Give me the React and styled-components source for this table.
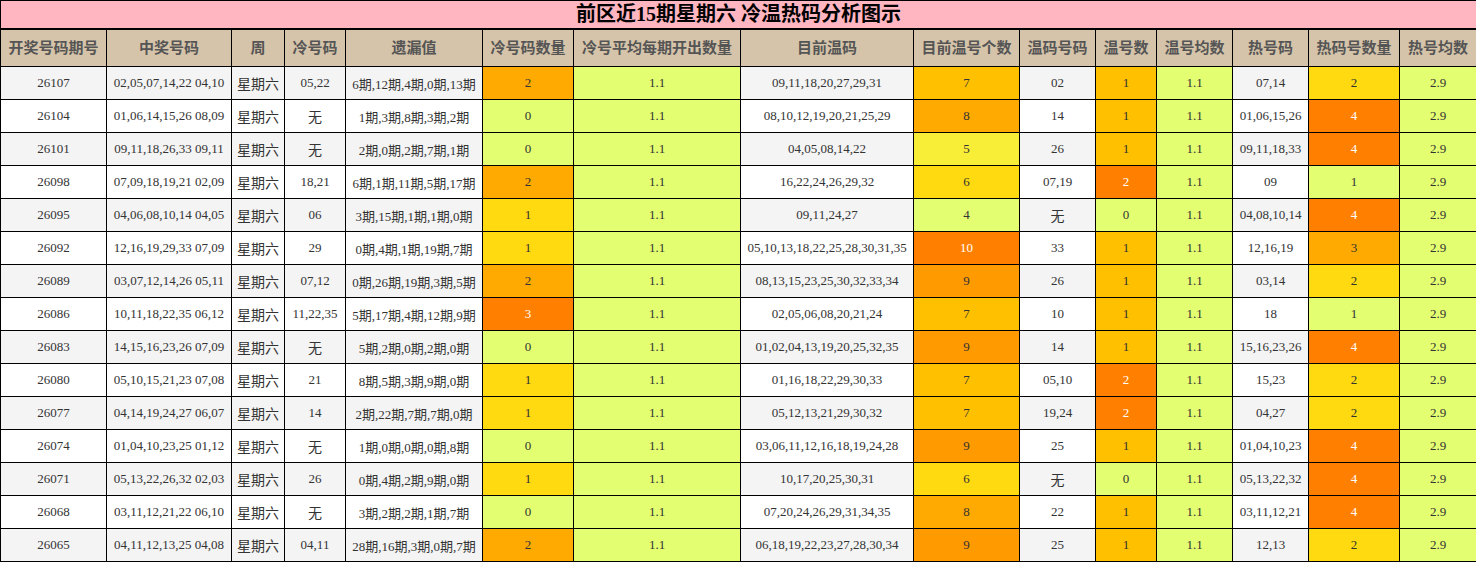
import React from "react";
import styled, { createGlobalStyle } from "styled-components";

const GlobalStyle = createGlobalStyle`
  body {
    margin: 0;
    background: #fff;
  }
`;

const FONT = `"Liberation Serif", "Noto Sans CJK SC", serif`;

// heat scale, from cool (green) to hot (dark orange)
const HEAT = ["#e4fe72", "#f8ee38", "#ffda10", "#ffc000", "#ffaa00", "#ff9a00", "#ff8000"];

const COLS = [106, 125, 53, 61, 137, 91, 167, 173, 106, 76, 61, 76, 76, 91, 77];

const HEADERS = [
  "开奖号码期号", "中奖号码", "周", "冷号码", "遗漏值", "冷号码数量", "冷号平均每期开出数量",
  "目前温码", "目前温号个数", "温码号码", "温号数", "温号均数", "热号码", "热码号数量", "热号均数",
];

const rows = [
  ["26107", "02,05,07,14,22 04,10", "05,22", "6期,12期,4期,0期,13期", 2, "09,11,18,20,27,29,31", 7, "02", 1, "07,14", 2],
  ["26104", "01,06,14,15,26 08,09", "无", "1期,3期,8期,3期,2期", 0, "08,10,12,19,20,21,25,29", 8, "14", 1, "01,06,15,26", 4],
  ["26101", "09,11,18,26,33 09,11", "无", "2期,0期,2期,7期,1期", 0, "04,05,08,14,22", 5, "26", 1, "09,11,18,33", 4],
  ["26098", "07,09,18,19,21 02,09", "18,21", "6期,1期,11期,5期,17期", 2, "16,22,24,26,29,32", 6, "07,19", 2, "09", 1],
  ["26095", "04,06,08,10,14 04,05", "06", "3期,15期,1期,1期,0期", 1, "09,11,24,27", 4, "无", 0, "04,08,10,14", 4],
  ["26092", "12,16,19,29,33 07,09", "29", "0期,4期,1期,19期,7期", 1, "05,10,13,18,22,25,28,30,31,35", 10, "33", 1, "12,16,19", 3],
  ["26089", "03,07,12,14,26 05,11", "07,12", "0期,26期,19期,3期,5期", 2, "08,13,15,23,25,30,32,33,34", 9, "26", 1, "03,14", 2],
  ["26086", "10,11,18,22,35 06,12", "11,22,35", "5期,17期,4期,12期,9期", 3, "02,05,06,08,20,21,24", 7, "10", 1, "18", 1],
  ["26083", "14,15,16,23,26 07,09", "无", "5期,2期,0期,2期,0期", 0, "01,02,04,13,19,20,25,32,35", 9, "14", 1, "15,16,23,26", 4],
  ["26080", "05,10,15,21,23 07,08", "21", "8期,5期,3期,9期,0期", 1, "01,16,18,22,29,30,33", 7, "05,10", 2, "15,23", 2],
  ["26077", "04,14,19,24,27 06,07", "14", "2期,22期,7期,7期,0期", 1, "05,12,13,21,29,30,32", 7, "19,24", 2, "04,27", 2],
  ["26074", "01,04,10,23,25 01,12", "无", "1期,0期,0期,0期,8期", 0, "03,06,11,12,16,18,19,24,28", 9, "25", 1, "01,04,10,23", 4],
  ["26071", "05,13,22,26,32 02,03", "26", "0期,4期,2期,9期,0期", 1, "10,17,20,25,30,31", 6, "无", 0, "05,13,22,32", 4],
  ["26068", "03,11,12,21,22 06,10", "无", "3期,2期,2期,1期,7期", 0, "07,20,24,26,29,31,34,35", 8, "22", 1, "03,11,12,21", 4],
  ["26065", "04,11,12,13,25 04,08", "04,11", "28期,16期,3期,0期,7期", 2, "06,18,19,22,23,27,28,30,34", 9, "25", 1, "12,13", 2],
];

const coldLevel = (n) => [0, 2, 4, 6][n];
const warmCountLevel = (n) => Math.min(6, Math.max(0, n - 4));
const warmNumLevel = (n) => [0, 3, 6][n];
const hotLevel = (n) => [0, 0, 2, 4, 6][n];

const Table = styled.table`
  width: 1476px;
  table-layout: fixed;
  border-collapse: collapse;
  font-family: ${FONT};
  color: #333;
`;

const TitleCell = styled.th`
  height: 27px;
  padding: 0;
  line-height: 27px;
  background: #ffb6c1;
  border: 1px solid #000;
  border-bottom-width: 2px;
  font-size: 20px;
  font-weight: bold;
  color: #000;
  text-align: center;
`;

const HeadCell = styled.th`
  height: 36px;
  padding: 0;
  line-height: 20px;
  background: #d5c4a9;
  border: 1px solid #000;
  font-size: 15px;
  font-weight: bold;
  color: #555;
  text-align: center;
  white-space: nowrap;
`;

const Row = styled.tr`
  background: ${(p) => (p.$striped ? "#f4f4f4" : "#fff")};
`;

const Cell = styled.td`
  height: 32px;
  padding: 0;
  border: 1px solid #000;
  font-size: 13px;
  text-align: center;
  white-space: nowrap;
  overflow: hidden;
`;

const HeatCell = styled(Cell)`
  background: ${(p) => HEAT[p.$level]};
  color: ${(p) => (p.$level === 6 ? "#fff" : "#333")};
`;

const Wide = styled.span`
  font-size: 14px;
`;

function App() {
  return (
    <>
      <GlobalStyle />
      <Table>
        <colgroup>
          {COLS.map((w, i) => (
            <col key={i} style={{ width: w }} />
          ))}
        </colgroup>
        <thead>
          <tr>
            <TitleCell colSpan={15}>前区近15期星期六 冷温热码分析图示</TitleCell>
          </tr>
          <tr>
            {HEADERS.map((h) => (
              <HeadCell key={h}>{h}</HeadCell>
            ))}
          </tr>
        </thead>
        <tbody>
          {rows.map((r, i) => {
            const [issue, nums, cold, miss, coldN, warm, warmN, warmCode, warmNum, hot, hotN] = r;
            return (
              <Row key={issue} $striped={i % 2 === 0}>
                <Cell>{issue}</Cell>
                <Cell>{nums}</Cell>
                <Cell><Wide>星期六</Wide></Cell>
                <Cell>{cold === "无" ? <Wide>无</Wide> : cold}</Cell>
                <Cell>{miss}</Cell>
                <HeatCell $level={coldLevel(coldN)}>{coldN}</HeatCell>
                <HeatCell $level={0}>1.1</HeatCell>
                <Cell>{warm}</Cell>
                <HeatCell $level={warmCountLevel(warmN)}>{warmN}</HeatCell>
                <Cell>{warmCode === "无" ? <Wide>无</Wide> : warmCode}</Cell>
                <HeatCell $level={warmNumLevel(warmNum)}>{warmNum}</HeatCell>
                <HeatCell $level={0}>1.1</HeatCell>
                <Cell>{hot}</Cell>
                <HeatCell $level={hotLevel(hotN)}>{hotN}</HeatCell>
                <HeatCell $level={0}>2.9</HeatCell>
              </Row>
            );
          })}
        </tbody>
      </Table>
    </>
  );
}

export default App;
